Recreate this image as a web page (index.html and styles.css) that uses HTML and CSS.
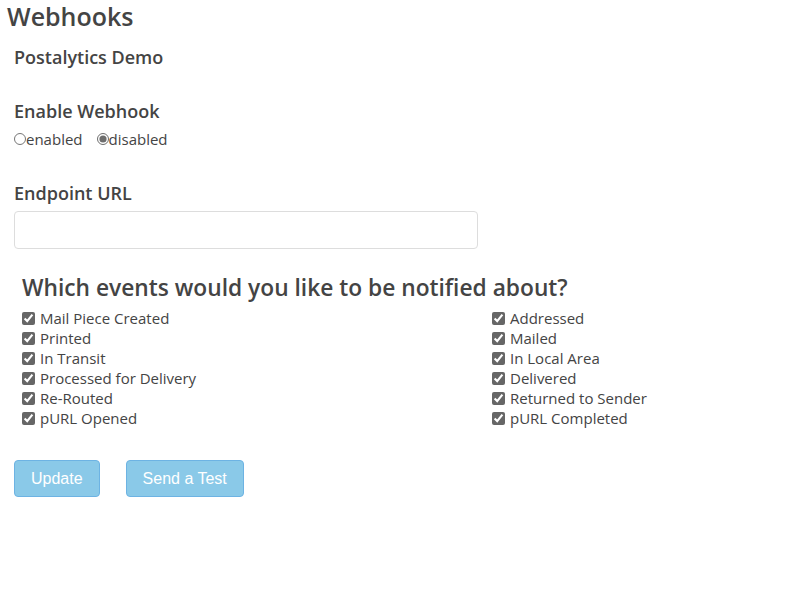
FILE: index.html
```html
<!DOCTYPE html>
<html>
<head>
<meta charset="utf-8">
<link rel="stylesheet" href="styles.css">
</head>
<body>
<div class="page">
  <h2 class="title">Webhooks</h2>
  <div class="content">
    <h4 class="label">Postalytics Demo</h4>
    <h4 class="label enable">Enable Webhook</h4>
    <div class="radios">
      <label class="radio"><input type="radio" name="en">enabled</label>
      <label class="radio"><input type="radio" name="en" checked>disabled</label>
    </div>
    <h4 class="label endpoint">Endpoint URL</h4>
    <input class="url" type="text">
    <div class="events">
      <h3 class="events-title">Which events would you like to be notified about?</h3>
      <div class="grid">
        <div class="col">
          <label class="cb"><input type="checkbox" checked> Mail Piece Created</label>
          <label class="cb"><input type="checkbox" checked> Printed</label>
          <label class="cb"><input type="checkbox" checked> In Transit</label>
          <label class="cb"><input type="checkbox" checked> Processed for Delivery</label>
          <label class="cb"><input type="checkbox" checked> Re-Routed</label>
          <label class="cb"><input type="checkbox" checked> pURL Opened</label>
        </div>
        <div class="col">
          <label class="cb"><input type="checkbox" checked> Addressed</label>
          <label class="cb"><input type="checkbox" checked> Mailed</label>
          <label class="cb"><input type="checkbox" checked> In Local Area</label>
          <label class="cb"><input type="checkbox" checked> Delivered</label>
          <label class="cb"><input type="checkbox" checked> Returned to Sender</label>
          <label class="cb"><input type="checkbox" checked> pURL Completed</label>
        </div>
      </div>
    </div>
    <div class="buttons">
      <button class="btn">Update</button>
      <button class="btn">Send a Test</button>
    </div>
  </div>
</div>
</body>
</html>
```
FILE: styles.css
```css
* { box-sizing: border-box; }
body {
  margin: 0;
  background: #fff;
  font-family: "Open Sans", "Noto Sans", sans-serif;
  color: #444;
}
.page { padding: 1px 7px 0; }
.title {
  margin: 0;
  font-size: 25px;
  font-weight: 600;
  line-height: 30px;
  color: #444;
}
.content { padding: 0 7px; }
.label {
  margin: 0;
  font-size: 18px;
  font-weight: 600;
  line-height: 24px;
  color: #444;
}
.title + .content .label:first-child { margin-top: 14px; }
.enable { margin-top: 30px !important; }
.radios {
  display: flex;
  gap: 14px;
  font-size: 15px;
  line-height: 20px;
  margin-top: 6px;
}
.radio { display: flex; align-items: center; }
.radio input {
  margin: 0;
  width: 12px;
  height: 12px;
  accent-color: #6d6d6d;
}
.endpoint { margin-top: 32px !important; }
.url {
  display: block;
  margin-top: 6px;
  width: 464px;
  height: 38px;
  border: 1px solid #ddd;
  border-radius: 4px;
}
.events { padding: 0 8px; margin-top: 24px; }
.events-title {
  margin: 0;
  font-size: 22.75px;
  font-weight: 600;
  line-height: 30px;
  color: #444;
}
.grid {
  display: grid;
  grid-template-columns: 470px 1fr;
  margin-top: 5px;
}
.cb {
  display: flex;
  align-items: center;
  gap: 5px;
  font-size: 15px;
  line-height: 20px;
}
.cb input {
  margin: 0;
  width: 13px;
  height: 13px;
  accent-color: #666;
}
.buttons {
  display: flex;
  gap: 26px;
  margin-top: 32px;
}
.btn {
  height: 37px;
  padding: 0 16px;
  font-family: "Liberation Sans", Arial, sans-serif;
  font-size: 16px;
  color: #fff;
  background: #8ac9e8;
  border: 1px solid #6db3e3;
  border-radius: 4px;
}
```
